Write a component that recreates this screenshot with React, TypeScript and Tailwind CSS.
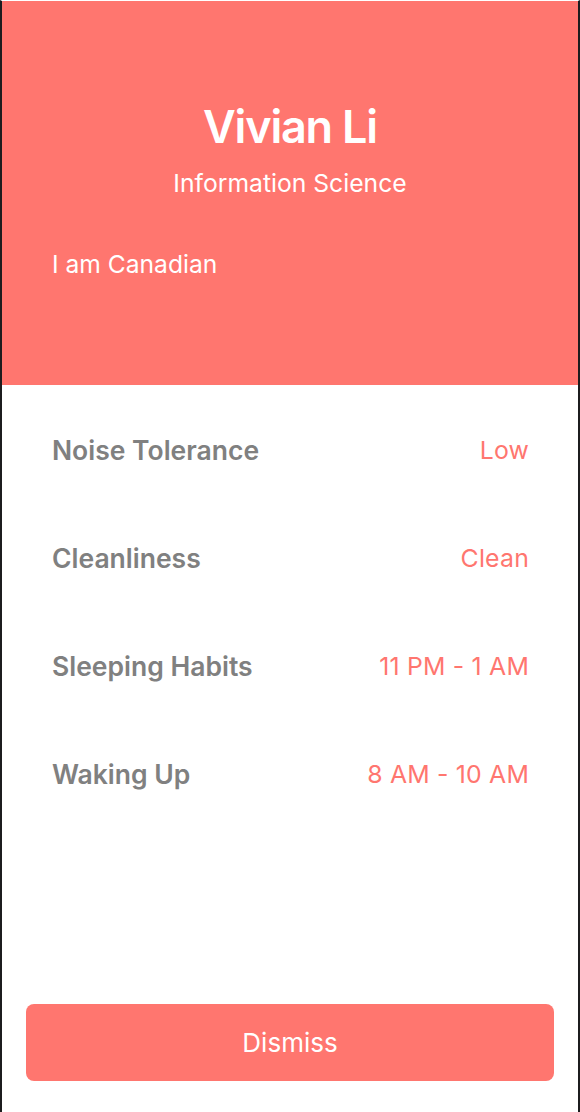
export default function App() {
  const rows = [
    ["Noise Tolerance", "Low"],
    ["Cleanliness", "Clean"],
    ["Sleeping Habits", "11 PM - 1 AM"],
    ["Waking Up", "8 AM - 10 AM"],
  ];
  return (
    <div
      className="w-full h-[1112px] flex flex-col bg-white border-l-2 border-r-2 border-[#1c1c1e] border-t border-t-white"
      style={{ fontFamily: "Inter, 'Noto Sans', sans-serif" }}
    >
      <div className="h-[384px] bg-[#ff766f] flex flex-col text-white pt-[99px]">
        <div className="text-center text-[45px] leading-[54px] font-semibold tracking-[-1.2px]">Vivian Li</div>
        <div className="text-center text-[24.7px] leading-[30px] mt-[14px]">Information Science</div>
        <div className="text-[24.6px] leading-[30px] mt-[51px] pl-[50px]">I am Canadian</div>
      </div>
      <div className="flex flex-col pt-[12px] pl-[50px] pr-[49px]">
        {rows.map(([k, v]) => (
          <div key={k} className="h-[108px] flex items-center justify-between">
            <span className="text-[26.5px] font-semibold text-[#808080]">{k}</span>
            <span className="text-[24.8px] tracking-[0.2px] text-[#ff766f]">{v}</span>
          </div>
        ))}
      </div>
      <div className="mt-auto mb-[31px] mx-[24px] h-[77px] rounded-[8px] bg-[#ff766f] flex items-center justify-center text-white text-[26px]">
        Dismiss
      </div>
    </div>
  );
}
